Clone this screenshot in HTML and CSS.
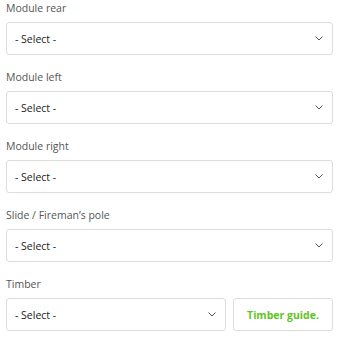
FILE: index.html
```html
<!DOCTYPE html>
<html>
<head>
<meta charset="utf-8">
<link rel="stylesheet" href="styles.css">
</head>
<body>
<form class="form">
  <div class="field">
    <label class="label">Module rear</label>
    <div class="select"><span>- Select -</span><svg class="chev" width="8" height="5" viewBox="0 0 8 5"><path d="M0.5 0.5 L4 4 L7.5 0.5" fill="none" stroke="#555" stroke-width="1"/></svg></div>
  </div>
  <div class="field">
    <label class="label">Module left</label>
    <div class="select"><span>- Select -</span><svg class="chev" width="8" height="5" viewBox="0 0 8 5"><path d="M0.5 0.5 L4 4 L7.5 0.5" fill="none" stroke="#555" stroke-width="1"/></svg></div>
  </div>
  <div class="field">
    <label class="label">Module right</label>
    <div class="select"><span>- Select -</span><svg class="chev" width="8" height="5" viewBox="0 0 8 5"><path d="M0.5 0.5 L4 4 L7.5 0.5" fill="none" stroke="#555" stroke-width="1"/></svg></div>
  </div>
  <div class="field">
    <label class="label">Slide / Fireman’s pole</label>
    <div class="select"><span>- Select -</span><svg class="chev" width="8" height="5" viewBox="0 0 8 5"><path d="M0.5 0.5 L4 4 L7.5 0.5" fill="none" stroke="#555" stroke-width="1"/></svg></div>
  </div>
  <div class="field">
    <label class="label">Timber</label>
    <div class="row">
      <div class="select grow"><span>- Select -</span><svg class="chev" width="8" height="5" viewBox="0 0 8 5"><path d="M0.5 0.5 L4 4 L7.5 0.5" fill="none" stroke="#555" stroke-width="1"/></svg></div>
      <div class="guide">Timber guide.</div>
    </div>
  </div>
</form>
</body>
</html>
```
FILE: styles.css
```css
html, body { margin: 0; padding: 0; background: #fff; }
body { font-family: "Open Sans", "Liberation Sans", sans-serif; font-size: 10.5px; color: #333; }
.form { padding: 0 20px 0 6px; display: flex; flex-direction: column; gap: 14px; }
.field { display: flex; flex-direction: column; gap: 6px; }
.label { display: block; line-height: 16px; color: #555; }
.select {
  height: 33px; box-sizing: border-box; border: 1px solid #ddd; border-radius: 3px;
  display: flex; align-items: center; justify-content: space-between;
  padding: 0 9px 0 8px; color: #222; background: #fff;
}
.chev { display: block; }
.row { display: flex; gap: 7px; }
.grow { flex: 1; }
.guide {
  width: 100px; height: 33px; box-sizing: border-box; border: 1px solid #ddd; border-radius: 3px;
  display: flex; align-items: center; justify-content: center;
  color: #5fc41c; font-weight: 700;
}
```
